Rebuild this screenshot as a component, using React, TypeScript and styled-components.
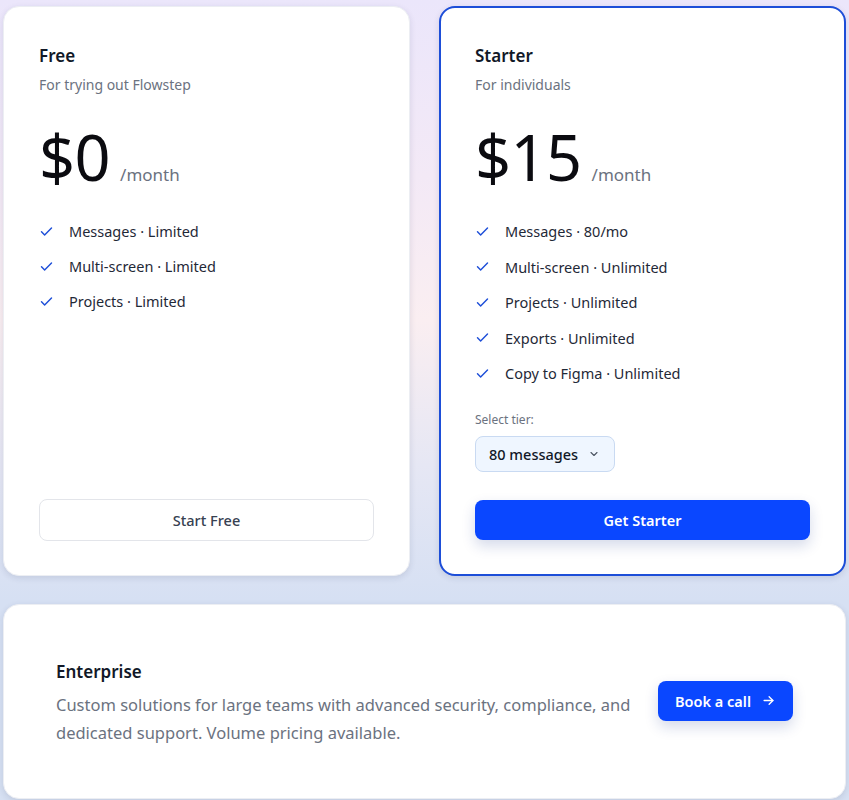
import React from 'react';
import styled, { createGlobalStyle } from 'styled-components';

const GlobalStyle = createGlobalStyle`
	* {
		box-sizing: border-box;
	}
	html,
	body {
		margin: 0;
		padding: 0;
	}
	body {
		font-family: 'Noto Sans', 'Open Sans', Arial, sans-serif;
		color: #111827;
		background: linear-gradient(
			180deg,
			#ebe6fb 0%,
			#f3e9f6 22%,
			#faeef1 40%,
			#e6e7f4 58%,
			#d6e0f3 75%,
			#d6e0f2 100%
		);
		min-height: 800px;
	}
`;

interface Plan {
	name: string;
	subtitle: string;
	price: string;
	features: string[];
	highlighted?: boolean;
	cta: string;
}

const plans: Plan[] = [
	{
		name: 'Free',
		subtitle: 'For trying out Flowstep',
		price: '$0',
		features: ['Messages · Limited', 'Multi-screen · Limited', 'Projects · Limited'],
		cta: 'Start Free',
	},
	{
		name: 'Starter',
		subtitle: 'For individuals',
		price: '$15',
		features: [
			'Messages · 80/mo',
			'Multi-screen · Unlimited',
			'Projects · Unlimited',
			'Exports · Unlimited',
			'Copy to Figma · Unlimited',
		],
		highlighted: true,
		cta: 'Get Starter',
	},
];

function CheckIcon() {
	return (
		<svg width='15' height='15' viewBox='0 0 24 24' fill='none' stroke='#1d4ed8' strokeWidth='2.3' strokeLinecap='round' strokeLinejoin='round'>
			<path d='M4 12.5l5 5L20 6.5' />
		</svg>
	);
}

function ChevronDown() {
	return (
		<svg width='12' height='12' viewBox='0 0 24 24' fill='none' stroke='#4b5563' strokeWidth='2.2' strokeLinecap='round' strokeLinejoin='round'>
			<path d='M6 9l6 6 6-6' />
		</svg>
	);
}

function ArrowRight() {
	return (
		<svg width='15' height='15' viewBox='0 0 24 24' fill='none' stroke='#ffffff' strokeWidth='2.2' strokeLinecap='round' strokeLinejoin='round'>
			<path d='M5 12h14' />
			<path d='M13 6l6 6-6 6' />
		</svg>
	);
}

function PlanCard({ plan }: { plan: Plan }) {
	return (
		<Card highlighted={plan.highlighted}>
			<PlanName>{plan.name}</PlanName>
			<PlanSubtitle>{plan.subtitle}</PlanSubtitle>
			<PriceRow>
				<Price>{plan.price}</Price>
				<PerMonth>/month</PerMonth>
			</PriceRow>
			<FeatureList highlighted={plan.highlighted}>
				{plan.features.map((f) => (
					<Feature key={f}>
						<CheckIcon />
						<span>{f}</span>
					</Feature>
				))}
			</FeatureList>
			{plan.highlighted && (
				<TierBox>
					<TierLabel>Select tier:</TierLabel>
					<TierSelect>
						80 messages
						<ChevronDown />
					</TierSelect>
				</TierBox>
			)}
			<CardFooter>
				<PlanButton primary={plan.highlighted}>{plan.cta}</PlanButton>
			</CardFooter>
		</Card>
	);
}

export default function App() {
	return (
		<>
			<GlobalStyle />
			<Page>
				<PlanGrid>
					{plans.map((p) => (
						<PlanCard key={p.name} plan={p} />
					))}
				</PlanGrid>
				<EnterpriseCard>
					<EnterpriseText>
						<PlanName>Enterprise</PlanName>
						<EnterpriseDesc>
							Custom solutions for large teams with advanced security, compliance, and dedicated support. Volume pricing
							available.
						</EnterpriseDesc>
					</EnterpriseText>
					<BookButton>
						Book a call
						<ArrowRight />
					</BookButton>
				</EnterpriseCard>
			</Page>
		</>
	);
}

const Page = styled.div`
	padding: 6px 3px 2px;
	display: flex;
	flex-direction: column;
	gap: 28px;
`;

const PlanGrid = styled.div`
	display: grid;
	grid-template-columns: 1fr 1fr;
	gap: 29px;
`;

const Card = styled.div<{ highlighted?: boolean }>`
	height: 570px;
	background: #ffffff;
	border-radius: 16px;
	border: ${(p) => (p.highlighted ? '2px solid #1d4ed8' : '1px solid #eceef3')};
	padding: ${(p) => (p.highlighted ? '37px 34px 34px' : '38px 35px 34px')};
	box-shadow: 0 2px 6px rgba(30, 41, 80, 0.12);
	display: flex;
	flex-direction: column;
`;

const PlanName = styled.h3`
	margin: 0;
	font-size: 17px;
	font-weight: 600;
	line-height: 22px;
	color: #111827;
`;

const PlanSubtitle = styled.p`
	margin: 8px 0 0;
	font-size: 14px;
	line-height: 20px;
	color: #6b7280;
`;

const PriceRow = styled.div`
	display: flex;
	align-items: baseline;
	gap: 10px;
	margin-top: 22px;
`;

const Price = styled.span`
	font-size: 63px;
	font-weight: 400;
	line-height: 80px;
	color: #0b0b10;
	letter-spacing: -0.5px;
`;

const PerMonth = styled.span`
	font-size: 17px;
	color: #6b7280;
`;

const FeatureList = styled.ul<{ highlighted?: boolean }>`
	list-style: none;
	margin: 23px 0 0;
	padding: 0;
	display: flex;
	flex-direction: column;
	gap: ${(p) => (p.highlighted ? '13.5px' : '13px')};
`;

const Feature = styled.li`
	display: flex;
	align-items: center;
	gap: 15px;
	font-size: 14.5px;
	line-height: 22px;
	color: #1f2937;
`;

const TierBox = styled.div`
	margin-top: 27px;
	display: flex;
	flex-direction: column;
	align-items: flex-start;
	gap: 8px;
`;

const TierLabel = styled.span`
	font-size: 12px;
	color: #6b7280;
`;

const TierSelect = styled.div`
	height: 36px;
	padding: 0 14px 0 13px;
	display: flex;
	align-items: center;
	gap: 10px;
	background: #eff6ff;
	border: 1px solid #c9daf2;
	border-radius: 8px;
	font-size: 14.5px;
	font-weight: 500;
	color: #111827;
`;

const CardFooter = styled.div`
	margin-top: auto;
`;

const PlanButton = styled.button<{ primary?: boolean }>`
	width: 100%;
	height: ${(p) => (p.primary ? '40px' : '42px')};
	border-radius: 8px;
	font-family: inherit;
	font-size: 14.5px;
	font-weight: ${(p) => (p.primary ? 600 : 500)};
	border: ${(p) => (p.primary ? 'none' : '1px solid #e3e5ea')};
	background: ${(p) => (p.primary ? '#0a47ff' : '#ffffff')};
	color: ${(p) => (p.primary ? '#ffffff' : '#374151')};
	box-shadow: ${(p) => (p.primary ? '0 6px 14px rgba(20, 50, 140, 0.18)' : 'none')};
	cursor: pointer;
`;

const EnterpriseCard = styled.div`
	height: 195px;
	background: #ffffff;
	border-radius: 16px;
	border: 1px solid #eceef3;
	box-shadow: 0 2px 6px rgba(30, 41, 80, 0.12);
	padding: 0 52px;
	display: flex;
	align-items: center;
	justify-content: space-between;
	gap: 26px;
`;

const EnterpriseText = styled.div`
	display: flex;
	flex-direction: column;
	gap: 8px;
	max-width: 580px;
	margin-top: 4px;
`;

const EnterpriseDesc = styled.p`
	margin: 0;
	font-size: 16.5px;
	line-height: 28px;
	color: #6b7280;
`;

const BookButton = styled.button`
	flex-shrink: 0;
	height: 40px;
	padding: 0 17px;
	display: flex;
	align-items: center;
	gap: 10px;
	border: none;
	border-radius: 8px;
	background: #0a47ff;
	color: #ffffff;
	font-family: inherit;
	font-size: 14.5px;
	font-weight: 600;
	box-shadow: 0 6px 14px rgba(20, 50, 140, 0.18);
	cursor: pointer;
	margin-bottom: 2px;
`;
